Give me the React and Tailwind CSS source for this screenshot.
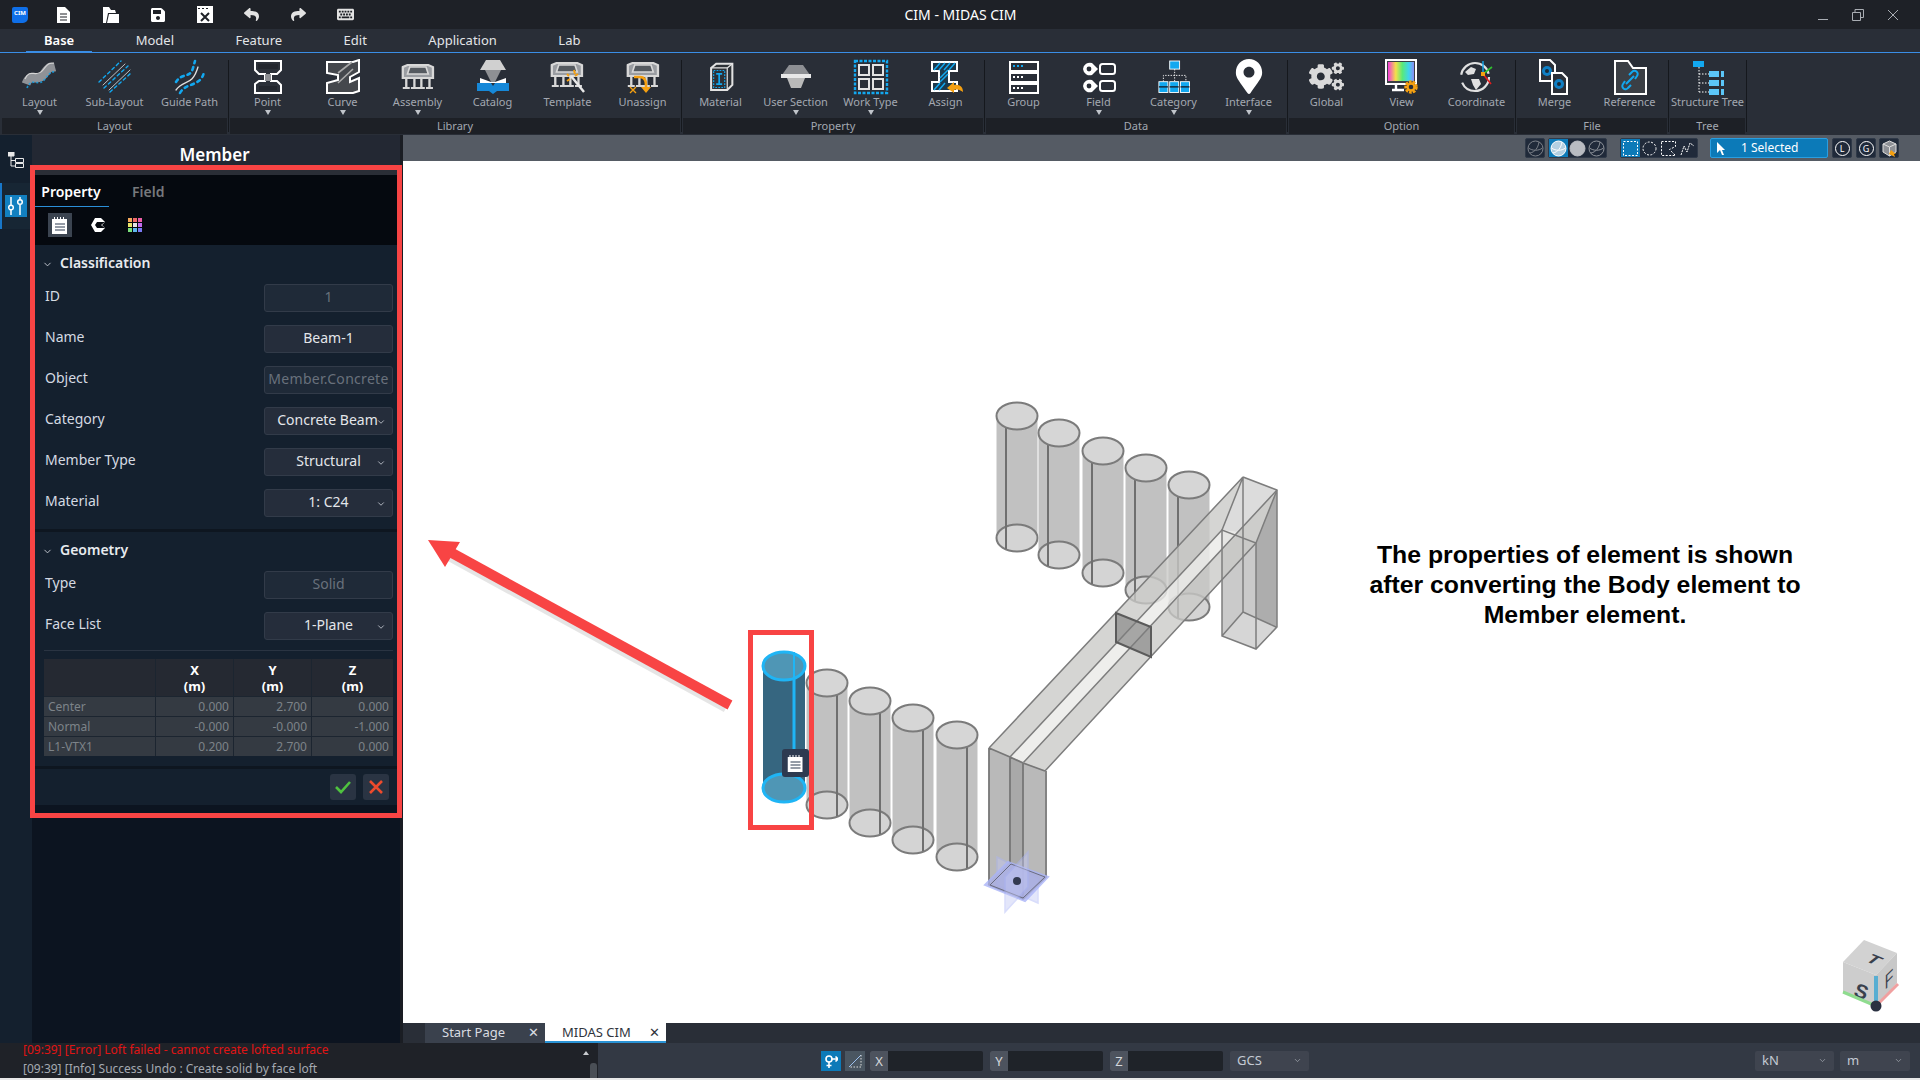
import { ChevronDown } from 'lucide-react';
import { FaCogs, FaMapMarkerAlt, FaReply, FaShare, FaKeyboard, FaSave } from 'react-icons/fa';

const BLUE = '#12a8f0';
const ORANGE = '#f5a011';

const Bridge = () => (
  <g fill="none" stroke="#d8d8d8" transform="translate(-3 0) scale(1.16 1)">
    <path d="M5 4l4-2h18l4 2v11H5z" fill="#9a9da2" strokeWidth="2" />
    <path d="M11 4h14l2 7H9z" fill="#555a60" strokeWidth="1.4" />
    <path d="M8 15v9M15 15v9M21 15v9M28 15v9M5 25h6M12 25h6M18 25h6M25 25h6" strokeWidth="2" />
  </g>
);

const Doc = ({ x = 0, y = 0 }) => (
  <g transform={`translate(${x} ${y})`}>
    <path d="M1 1h10l5 5v16H1z" fill="#2b3038" stroke="#fff" strokeWidth="2" />
    <circle cx="8" cy="12" r="5" fill="#0f7fc4" />
    <circle cx="8" cy="12" r="2" fill="#1b2a36" />
  </g>
);

const Row = ({ y }) => (
  <g>
    <rect x="4" y={y} width="28" height="9" fill="none" stroke="#fff" strokeWidth="2" />
    <rect x="7" y={y + 3} width="2" height="2" fill={y === 3 ? BLUE : '#fff'} />
    <rect x="11" y={y + 3} width="2" height="2" fill={y === 3 ? BLUE : '#fff'} />
    <rect x="15" y={y + 3} width="2" height="2" fill={y === 3 ? BLUE : '#fff'} />
  </g>
);

const RIBBON_ICONS = {
  layout: (
    <g fill="none">
      <path d="M4 25C9 12 15 25 22 15S29 9 33 8" stroke="#8f9297" strokeWidth="9" />
      <path d="M3 20C8 8 14 20 21 11S28 5 32 4" stroke="#d5d5d5" strokeWidth="1.2" />
      <path d="M5 29C10 17 16 29 23 20S30 14 34 12" stroke={BLUE} strokeWidth="1.6" strokeDasharray="2 2" opacity=".8" />
    </g>
  ),
  sublayout: (
    <g fill="none" strokeLinecap="round">
      <path d="M2 23L24 2M7 29L31 7M13 33L34 14" stroke={BLUE} strokeWidth="1.4" strokeDasharray="3 3" />
      <path d="M6 26L28 5M12 31L33 11" stroke="#bfc2c6" strokeWidth="1" />
    </g>
  ),
  guide: (
    <g fill="none" strokeLinecap="round">
      <path d="M4 23C10 13 18 20 21 9L23 2" stroke={BLUE} strokeWidth="2.6" strokeDasharray="3 4" />
      <path d="M8 34C14 23 29 28 32 13" stroke={BLUE} strokeWidth="2.6" strokeDasharray="3 4" />
      <path d="M4 31C12 20 20 28 26 8" stroke="#e0e0e0" strokeWidth="1.3" />
    </g>
  ),
  point: (
    <g>
      <path d="M5 2h26v9l-4 4h-6v7h6l4 4v8H5v-9l4-3h6v-7H9l-4-4z" fill="#2b3038" stroke="#fff" strokeWidth="2" />
      <path d="M15 15h6v7h-6z" fill="#8d8f93" />
      <path d="M8 5h20v5H8zM9 27h18v4H9z" fill="#23272e" />
    </g>
  ),
  curve: (
    <g>
      <path d="M2 3h26l6-2v12l-9 5v5l9-4v13l-6 2H2V24l11-3v-5L2 14z" fill="#45484d" stroke="#fff" strokeWidth="2" />
      <path d="M13 14l14-11M13 24l15-14" stroke="#aaa" strokeWidth="1.6" />
    </g>
  ),
  assembly: <g transform="translate(0 4)"><Bridge /></g>,
  catalog: (
    <g>
      <path d="M11 1h14l6 10H5z" fill="#d0d0d0" />
      <path d="M10 11h16l-6 12h-4z" fill="#8e9093" />
      <path d="M2 24l14 0 2 3 2-3h14v8H22l-4 3-4-3H2z" fill="#1688d8" />
      <path d="M5 19l11 4h4l11-4v5H5z" fill="#fff" />
    </g>
  ),
  template: (
    <g>
      <g transform="translate(-1 2)"><Bridge /></g>
      <path d="M21 17l13 16" stroke="#e8e8e8" strokeWidth="2.4" />
      <path d="M17 15l2 2M24 11l1 4M28 15l-3 2M17 22l3-2" stroke={ORANGE} strokeWidth="2" />
    </g>
  ),
  unassign: (
    <g>
      <g transform="translate(0 2)"><Bridge /></g>
      <path d="M9 18h6c5 0 6 4 6 8v3" fill="none" stroke={ORANGE} strokeWidth="2.6" />
      <path d="M16 28h10l-5 6z" fill={ORANGE} />
      <path d="M5 28l6 6M11 28l-6 6" stroke={ORANGE} strokeWidth="1.4" />
    </g>
  ),
  material: (
    <g transform="translate(3 3) scale(.85)">
      <path d="M6 7l6-5h19v25l-6 6H6z" fill="#2d3136" stroke="#e2e2e2" strokeWidth="2.400" />
      <path d="M6 7h19v26M25 7l6-5" fill="none" stroke="#e2e2e2" strokeWidth="1.4" />
      <rect x="9" y="10" width="13" height="20" fill="none" stroke={BLUE} strokeWidth="1.4" strokeDasharray="2 1.5" />
      <path d="M12 14h7M12 26h7M15.500 14v12" stroke={BLUE} strokeWidth="2" />
    </g>
  ),
  section: (
    <g>
      <path d="M11 6h14l7 10H4z" fill="#8d8f93" />
      <path d="M3 15h30v4H3z" fill="#e8e8e8" />
      <path d="M9 19h18l-4 10H13z" fill="#b9b9b9" />
    </g>
  ),
  worktype: (
    <g fill="none">
      <rect x="2" y="2" width="32" height="32" stroke={BLUE} strokeWidth="2.4" strokeDasharray="3 1.500" />
      <path d="M6 6h10v10H6zM20 6h10v10H20zM6 20h10v10H6zM20 20h10v10H20z" stroke="#e3e3e3" strokeWidth="2" />
    </g>
  ),
  assign: (
    <g>
      <path d="M4 3h25v9h-8v11h8v9H4V23h7V12H4z" fill="#1b3a4e" stroke="#fff" strokeWidth="2" />
      <path d="M6 11l6-7M11 11l6-7M16 11l6-7M21 11l6-7M12 19l8-8M12 23l8-8M6 31l6-7M11 31l6-7" stroke={BLUE} strokeWidth="1.500" />
      <path d="M35 33c0-5-3-8-9-7v-3l-7 6 7 5v-3c4-1 6 0 9 2z" fill={ORANGE} />
    </g>
  ),
  group: (
    <g>
      <Row y={3} />
      <Row y={14} />
      <Row y={25} />
    </g>
  ),
  field: (
    <g>
      <path d="M2 10a7 7 0 0 1 9-6l6 6-6 6a7 7 0 0 1-9-6z" fill="#fff" />
      <circle cx="8" cy="10" r="2.400" fill="#292e37" />
      <rect x="19" y="5" width="15" height="10" rx="2.500" fill="none" stroke="#fff" strokeWidth="2" />
      <path d="M2 27a7 7 0 0 1 9-6l6 6-6 6a7 7 0 0 1-9-6z" fill="#fff" />
      <circle cx="8" cy="27" r="2.400" fill="#292e37" />
      <rect x="19" y="22" width="15" height="10" rx="2.500" fill="none" stroke="#fff" strokeWidth="2" />
    </g>
  ),
  category: (
    <g transform="translate(2 2) scale(.9)">
      <rect x="13" y="0" width="11" height="9" fill={BLUE} stroke="#fff" />
      <path d="M18.500 9v14M6 23v-7h25v7" fill="none" stroke="#fff" strokeDasharray="1.500 1.500" />
      {[1, 13, 25].map((x) => (
        <g key={x}>
          <rect x={x} y="23" width="10" height="12" fill={BLUE} stroke="#fff" />
          <rect x={x} y="28" width="10" height="1.500" fill="#14202e" />
        </g>
      ))}
    </g>
  ),
  view: (
    <g>
      <defs>
        <linearGradient id="rainbow" x1="0" x2="1" y1="0" y2="0">
          <stop offset="0" stopColor="#f03bd8" />
          <stop offset=".3" stopColor="#f4e04a" />
          <stop offset=".55" stopColor="#59ea78" />
          <stop offset=".8" stopColor="#3fd4ee" />
          <stop offset="1" stopColor="#8a8cf5" />
        </linearGradient>
      </defs>
      <rect x="2" y="1" width="30" height="24" fill="#3b3f45" stroke="#fff" strokeWidth="2" />
      <rect x="4" y="3" width="26" height="19" fill="url(#rainbow)" />
      <path d="M12 25v6M8 31h12" stroke="#fff" strokeWidth="2.400" />
      <circle cx="27" cy="28" r="5" fill="#292e37" stroke={ORANGE} strokeWidth="3.400" strokeDasharray="2.500 1" />
      <circle cx="27" cy="28" r="3.500" fill="#292e37" stroke={ORANGE} strokeWidth="2.400" />
    </g>
  ),
  coordinate: (
    <g>
      <circle cx="16" cy="18" r="14" fill="none" stroke="#e0e0e0" strokeWidth="2.200" strokeDasharray="38 8" />
      <path d="M6 13l6-5 5 2-2 5-6 1zM12 20l8 0 2 5-5 6-3-5z" fill="#e0e0e0" />
      <path d="M24 15V2" stroke={BLUE} strokeWidth="1.400" />
      <path d="M24 15l9-7" stroke="#2fc12f" strokeWidth="1.600" />
      <path d="M24 15l8 10" stroke="#e81c1c" strokeWidth="1.600" />
      <rect x="22" y="13" width="4" height="4" fill={ORANGE} />
    </g>
  ),
  merge: (
    <g>
      <Doc x={2} y={0} />
      <Doc x={14} y={13} />
    </g>
  ),
  reference: (
    <g>
      <path d="M3 2h13l5 7h13v26H3z" fill="#3b3f45" stroke="#fff" strokeWidth="2" />
      <path d="M14 25l8-8M13 22l-2 3a3 3 0 0 0 5 4l3-3M23 20l2-3a3 3 0 0 0-5-4l-3 3" fill="none" stroke={BLUE} strokeWidth="2" />
    </g>
  ),
  tree: (
    <g>
      <rect x="3" y="2" width="11" height="6" fill={BLUE} />
      <path d="M9 8v25M9 15h10M9 24h10M9 33h10" fill="none" stroke="#fff" strokeDasharray="1.500 1.500" />
      {[12, 21, 30].map((y) => (
        <g key={y}>
          <rect x="19" y={y} width="10" height="6" fill="#5bc6f8" />
          <rect x="31" y={y} width="3" height="6" fill="#5bc6f8" />
        </g>
      ))}
    </g>
  ),
};

const GROUPS = [
  { name: 'Layout', items: [['Layout', 'layout', 1], ['Sub-Layout', 'sublayout'], ['Guide Path', 'guide']] },
  {
    name: 'Library',
    items: [['Point', 'point', 1], ['Curve', 'curve', 1], ['Assembly', 'assembly', 1], ['Catalog', 'catalog'], ['Template', 'template'], ['Unassign', 'unassign']],
  },
  { name: 'Property', items: [['Material', 'material'], ['User Section', 'section', 1], ['Work Type', 'worktype', 1], ['Assign', 'assign']] },
  { name: 'Data', items: [['Group', 'group'], ['Field', 'field', 1], ['Category', 'category', 1], ['Interface', 'interface', 1]] },
  { name: 'Option', items: [['Global', 'global'], ['View', 'view'], ['Coordinate', 'coordinate']] },
  { name: 'File', items: [['Merge', 'merge'], ['Reference', 'reference']] },
  { name: 'Tree', items: [['Structure Tree', 'tree']] },
];

function RibbonIcon({ id }) {
  if (id === 'global') return <FaCogs className="w-[35px] h-[35px] text-[#d9d9d9]" />;
  if (id === 'interface') return <FaMapMarkerAlt className="w-[32px] h-[35px] text-white" />;
  return (
    <svg width="36" height="36" viewBox="0 0 36 36">
      {RIBBON_ICONS[id]}
    </svg>
  );
}

function RibbonItem({ label, icon, caret }) {
  return (
    <div className="w-[75px] flex flex-col items-center">
      <div className="h-[37px] flex items-center justify-center">
        <RibbonIcon id={icon} />
      </div>
      <div className="text-[11px] leading-[14px] text-[#a3a8b1] whitespace-nowrap">{label}</div>
      {caret && <div className="mt-[1px] w-0 h-0 border-x-[3px] border-x-transparent border-t-[5px] border-t-[#c0c4ca]" />}
    </div>
  );
}

function Ribbon() {
  return (
    <div className="h-[82px] bg-[#292e37] flex pl-[2px]">
      {GROUPS.map((g) => (
        <div key={g.name} className="flex">
          <div className="flex flex-col pt-[5px]">
            <div className="flex h-[60px]">
              {g.items.map(([label, icon, caret]) => (
                <RibbonItem key={label} label={label} icon={icon} caret={caret} />
              ))}
            </div>
            <div className="h-[16px] bg-[#1d2026] text-[11px] leading-[16px] text-center text-[#a3a8b1]">{g.name}</div>
          </div>
          <div className="w-[3px] flex justify-center pt-[7px] pb-[3px]">
            <div className="w-px bg-[#15181d]" />
          </div>
        </div>
      ))}
    </div>
  );
}

function TitleBar() {
  const cell = 'w-[47px] flex items-center justify-center text-white';
  return (
    <div className="h-[29px] bg-[#1e2127] flex items-center">
      <div className="flex-1 flex h-full">
        <div className="w-[40px] flex items-center justify-center">
          <div className="w-[16px] h-[16px] bg-[#0f6fe8] rounded-[2px] rounded-br-[5px] text-[6px] leading-[12px] font-bold text-center text-white">CIM</div>
        </div>
        <div className={cell}>
          <svg width="13" height="16" viewBox="0 0 13 16">
            <path d="M0 0h8l5 5v11H0z" fill="#fff" />
            <path d="M3 7h7M3 10h7M3 13h7" stroke="#1e2127" />
          </svg>
        </div>
        <div className={cell}>
          <svg width="16" height="16" viewBox="0 0 16 16">
            <path d="M0 0h6l2 3h4l1 3H5L3 16H0z" fill="#fff" />
            <path d="M6 7h10v9H4z" fill="#fff" />
          </svg>
        </div>
        <div className={cell}><FaSave className="w-[16px] h-[16px]" /></div>
        <div className={cell}>
          <svg width="16" height="17" viewBox="0 0 16 17">
            <path d="M0 0h16v17H0z" fill="#fff" />
            <path d="M1 2h2v1H1zM5 2h2v1H5zM9 2h2v1H9z" fill="#1e2127" />
            <path d="M4 7l8 8M12 7l-8 8" stroke="#1e2127" strokeWidth="2" />
          </svg>
        </div>
        <div className={cell}><FaReply className="w-[15px] h-[15px] text-[#e2e2e2]" /></div>
        <div className={cell}><FaShare className="w-[15px] h-[15px] text-[#e2e2e2]" /></div>
        <div className={cell}><FaKeyboard className="w-[17px] h-[17px] text-[#e2e2e2]" /></div>
      </div>
      <div className="text-[14px] text-white pl-[11px]">CIM - MIDAS CIM</div>
      <div className="flex-1 flex justify-end pr-[10px] text-[#a9adb3]">
        <div className="w-[35px] flex justify-center">
          <svg width="12" height="12" viewBox="0 0 12 12"><path d="M1 10.500h10" stroke="currentColor" /></svg>
        </div>
        <div className="w-[35px] flex justify-center">
          <svg width="12" height="12" viewBox="0 0 12 12" fill="none" stroke="currentColor"><path d="M.5 3.500h8v8h-8zM3 3.500V.5h8.500v8H8.500" /></svg>
        </div>
        <div className="w-[35px] flex justify-center">
          <svg width="12" height="12" viewBox="0 0 12 12"><path d="M1 1l10 10M11 1L1 11" stroke="currentColor" /></svg>
        </div>
      </div>
    </div>
  );
}

function MenuTabs() {
  const tabs = ['Base', 'Model', 'Feature', 'Edit', 'Application', 'Lab'];
  return (
    <div className="h-[24px] bg-[#292e37] border-b border-[#3a8ee6] flex pl-[26px] gap-[25.5px]">
      {tabs.map((t) => (
        <div
          key={t}
          className={`px-[18px] text-[13px] leading-[23px] h-[23px] ${t === 'Base' ? 'font-semibold text-white border-b border-[#3a8ee6]' : 'text-[#e3e5e8]'}`}
        >
          {t}
        </div>
      ))}
    </div>
  );
}

function Field({ label, value, disabled, select, small, wide }) {
  return (
    <div className="flex h-[28px] justify-between">
      <div className="text-[14px] leading-[24px] text-[#d5dae2] pl-[13px]">{label}</div>
      <div className={`relative w-[129px] h-[28px] rounded-[3px] border border-[#323b49] ${disabled ? 'bg-[#1f2a38] text-[#69717c]' : 'bg-[#252d3b] text-[#e3e6ea]'} text-[14px] leading-[24px] text-center whitespace-nowrap overflow-hidden ${small ? 'pl-[2px] pr-[4px] text-[13.800px]' : ''} ${wide ? 'tracking-[0.3px]' : ''}`}>
        {value}
        {select && <ChevronDown className="absolute right-[6px] top-[9px] w-[10px] h-[10px] text-[#c9ced6]" />}
      </div>
    </div>
  );
}

function SectionTitle({ children }) {
  return (
    <div className="h-[20px] flex items-center pl-[10px] gap-[7px] text-[14px] leading-[18px] font-semibold text-[#e8ebef]">
      <ChevronDown className="w-[11px] h-[11px] text-[#c9ced6]" />
      <span className="-mt-[2px]">{children}</span>
    </div>
  );
}

const TABLE_ROWS = [
  ['Center', '0.000', '2.700', '0.000'],
  ['Normal', '-0.000', '-0.000', '-1.000'],
  ['L1-VTX1', '0.200', '2.700', '0.000'],
];

function CoordTable() {
  return (
    <div className="mt-[8px] grid grid-cols-[111px_77px_77px_81px] gap-px bg-[#1c2530]">
      <div className="h-[37px] bg-[#252932]" />
      {['X', 'Y', 'Z'].map((h) => (
        <div key={h} className="h-[37px] bg-[#252932] text-center text-[13px] leading-[16px] font-bold text-white pt-[3px]">
          {h}
          <br />
          (m)
        </div>
      ))}
      {TABLE_ROWS.map((row) =>
        row.map((cell, i) => (
          <div key={row[0] + i} className={`h-[19px] bg-[#343a42] text-[12px] leading-[19px] text-[#7d8389] px-[4px] ${i === 0 ? '' : 'text-right'}`}>
            {cell}
          </div>
        ))
      )}
    </div>
  );
}

function PropertyPanel() {
  return (
    <div className="w-[371px] flex flex-col bg-[#0c1420] border-r-[3px] border-[#1a1d23]">
      <div className="h-[30px] bg-[#232833] text-center text-[17px] leading-[30px] font-semibold text-white pt-[5px] pr-[3px]">Member</div>
      <div className="h-[10px] bg-[#2a2e36]" />
      <div className="h-[70px] bg-[#05090f] pl-[3px]">
        <div className="h-[32px] flex">
          <div className="w-[74px] h-[32px] pr-[2px] border-b border-[#2b8fd8] text-center text-[14px] leading-[34px] font-semibold text-white">Property</div>
          <div className="ml-[23px] text-[14px] leading-[34px] font-semibold text-[#77797c]">Field</div>
        </div>
        <div className="flex items-center mt-[6px] pl-[13px]">
          <div className="w-[24px] h-[24px] bg-[#3b4450] flex items-center justify-center">
            <MemoIcon />
          </div>
          <svg width="16" height="16" viewBox="0 0 16 16" className="ml-[18px]">
            <path d="M5 1h6l4 4-3 3 3 3-4 4H5L1 8z" fill="#fff" />
            <path d="M7 5h8L11 8l4 3H7L5 8z" fill="#05090f" />
          </svg>
          <div className="ml-[22px] grid grid-cols-3 gap-px w-[14px]">
            {['#f5a95c', '#f06a6a', '#ee5fa8', '#e9e469', '#e6e6e6', '#c46bf0', '#7be07b', '#5fb8f0', '#7a7af5'].map((c) => (
              <div key={c} className="h-[4px]" style={{ backgroundColor: c }} />
            ))}
          </div>
        </div>
      </div>
      <div className="bg-[#14202e] pt-[9px] pb-[12px] pr-[7px]">
        <SectionTitle>Classification</SectionTitle>
        <div className="mt-[10px] flex flex-col gap-[13px]">
          <Field label="ID" value="1" disabled />
          <Field label="Name" value="Beam-1" />
          <Field label="Object" value="Member.Concrete" disabled wide />
          <Field label="Category" value="Concrete Beam" select small />
          <Field label="Member Type" value="Structural" select />
          <Field label="Material" value="1: C24" select />
        </div>
      </div>
      <div className="h-[3px] bg-[#0e1620]" />
      <div className="bg-[#14202e] pt-[9px] pb-[10px] pr-[7px]">
        <SectionTitle>Geometry</SectionTitle>
        <div className="mt-[10px] flex flex-col gap-[13px]">
          <Field label="Type" value="Solid" disabled />
          <Field label="Face List" value="1-Plane" select />
        </div>
        <div className="mt-[10px] ml-[12px]">
          <div className="h-px bg-[#2a3442]" />
          <CoordTable />
        </div>
      </div>
      <div className="h-[3px] bg-[#0e1620]" />
      <div className="bg-[#14202e] h-[36px] flex items-center justify-end gap-[7px] pr-[11px]">
        <div className="w-[26px] h-[26px] rounded-[3px] bg-[#2a3443] flex items-center justify-center">
          <svg width="16" height="14" viewBox="0 0 16 14"><path d="M1 7l5 5 9-10" fill="none" stroke="#4fc23f" strokeWidth="2.600" /></svg>
        </div>
        <div className="w-[26px] h-[26px] rounded-[3px] bg-[#2a3443] flex items-center justify-center">
          <svg width="14" height="14" viewBox="0 0 14 14"><path d="M1 1l12 12M13 1L1 13" stroke="#ee4a2c" strokeWidth="2.600" /></svg>
        </div>
      </div>
      <div className="flex-1" />
    </div>
  );
}

function MemoIcon() {
  return (
    <svg width="16" height="17" viewBox="0 0 16 17">
      <path d="M0 2h2V0h1v2h2V0h1v2h2V0h1v2h2V0h1v2h3v15H0z" fill="#fff" />
      <path d="M3 7h10M3 10h10M3 13h10" stroke="#2d3a50" strokeWidth="1.200" />
    </svg>
  );
}

function Rail() {
  return (
    <div className="w-[32px] bg-[#14202e] pt-[17px] flex flex-col">
      <svg width="16" height="16" viewBox="0 0 16 16" className="ml-[8px]" fill="none" stroke="#e8e8e8">
        <path d="M0 0h6v4H0z" fill="#e8e8e8" />
        <path d="M3 4v10h4M3 8.500h4M7.500 6.500h8v4h-8zM7.500 11.500h8v4h-8z" />
      </svg>
      <div className="mt-[15px] h-[46px] bg-[#172634] border-l-[2px] border-[#1877c9] flex items-center pl-[3px]">
        <div className="w-[22px] h-[22px] bg-[#1280c0] flex items-center justify-center">
          <svg width="16" height="18" viewBox="0 0 16 18" fill="none" stroke="#fff" strokeWidth="1.500">
            <path d="M3 0v8M3 13v5M12 0v2M12 8v10" />
            <circle cx="3" cy="10.500" r="2.300" />
            <circle cx="12" cy="5" r="2.300" />
          </svg>
        </div>
      </div>
    </div>
  );
}

function ViewBtn({ active, children }) {
  return <div className={`h-[18px] w-[19px] flex items-center justify-center ${active ? 'bg-[#0c7ab8]' : ''}`}>{children}</div>;
}

const Sphere = ({ fill = 'none', stroke = '#c8ccd2', grid }) => (
  <svg width="17" height="17" viewBox="0 0 17 17" fill={fill} stroke={stroke}>
    <circle cx="8.500" cy="8.500" r="7.500" />
    {grid && <path d="M3 13c5-1 8-5 9-11M1.500 8c4 3 10 3 14 0" />}
  </svg>
);

function ViewToolbar() {
  const box = 'h-[20px] bg-[#202a3a] rounded-[2px] border border-[#2f3948] flex items-center';
  return (
    <div className="h-[26px] bg-[#555b64] flex items-center justify-end pr-[21px]">
      <div className={`${box} w-[20px] justify-center mr-[3px]`}>
        <Sphere stroke="#7d828a" grid />
      </div>
      <div className={`${box} mr-[13px]`}>
        <ViewBtn active><Sphere fill="#b4d0e2" stroke="#fff" grid /></ViewBtn>
        <ViewBtn><Sphere fill="#b9bcc2" stroke="#b9bcc2" /></ViewBtn>
        <ViewBtn><Sphere stroke="#8e939a" grid /></ViewBtn>
      </div>
      <div className={`${box} mr-[12px]`}>
        <ViewBtn active>
          <svg width="15" height="15" viewBox="0 0 15 15"><rect x=".5" y=".5" width="14" height="14" fill="none" stroke="#fff" strokeDasharray="2 1.500" /></svg>
        </ViewBtn>
        <ViewBtn>
          <svg width="15" height="15" viewBox="0 0 15 15"><circle cx="7.500" cy="7.500" r="6.500" fill="none" stroke="#fff" strokeDasharray="2 1.500" /></svg>
        </ViewBtn>
        <ViewBtn>
          <svg width="15" height="15" viewBox="0 0 15 15"><path d="M.5.5h14v5l-6 3 6 6H.5z" fill="none" stroke="#fff" strokeDasharray="2 1.500" /></svg>
        </ViewBtn>
        <ViewBtn>
          <svg width="15" height="15" viewBox="0 0 15 15"><path d="M1 14l3-9 3 6 3-9 4 3" fill="none" stroke="#fff" strokeDasharray="2 1" /></svg>
        </ViewBtn>
      </div>
      <div className="h-[20px] w-[118px] mr-[4px] bg-[#0c7ab8] border border-[#2a9ee0] rounded-[2px] flex items-center text-[12px] text-white">
        <svg width="9" height="13" viewBox="0 0 9 13" className="ml-[6px]"><path d="M0 0l8 8H5l2 5-2 0-2-5-3 3z" fill="#fff" /></svg>
        <span className="ml-[15px]">1 Selected</span>
      </div>
      <div className={`${box} w-[20px] justify-center mr-[4px]`}>
        <div className="w-[15px] h-[15px] rounded-full border border-white text-[9px] leading-[13px] text-center text-white">L</div>
      </div>
      <div className={`${box} w-[20px] justify-center mr-[3px]`}>
        <div className="w-[15px] h-[15px] rounded-full border border-white text-[9px] leading-[13px] text-center text-white">G</div>
      </div>
      <div className={`${box} w-[20px] justify-center`}>
        <svg width="15" height="17" viewBox="0 0 15 17">
          <path d="M7.500 1l6.500 3v8l-6.500 4L1 12V4z" fill="#8d9096" stroke="#ddd" />
          <path d="M1 4l6.500 3L14 4M7.500 7v9" stroke="#ddd" fill="none" />
          <path d="M9 10l5 4-2 0 1 3-6-3z" fill={ORANGE} />
        </svg>
      </div>
    </div>
  );
}

const BACK_ROW = [[1017, 416], [1059, 433], [1103, 451], [1146, 468], [1189, 485]];
const FRONT_ROW = [[827, 683], [870, 701], [913, 718], [957, 735]];

function Cylinder({ cx, cy, line }) {
  return (
    <g>
      <path d={`M${cx - 20.5} ${cy}V${cy + 122}A20.500 13.500 0 0 0 ${cx + 20.5} ${cy + 122}V${cy}z`} fill="#bababa" opacity=".9" />
      <ellipse cx={cx} cy={cy + 122} rx="20.500" ry="13.500" fill="#d4d4d4" stroke="#7b7b7b" strokeWidth="2" />
      <path d={`M${cx + line} ${cy + 12}V${cy + 133}`} stroke="#6f6f6f" strokeWidth="2" />
      <ellipse cx={cx} cy={cy} rx="20.500" ry="13.500" fill="#d6d6d6" stroke="#7b7b7b" strokeWidth="2" />
    </g>
  );
}

function Model() {
  return (
    <svg className="absolute inset-0 w-full h-full" viewBox="403 161 1517 862">
      {BACK_ROW.map(([x, y]) => (
        <Cylinder key={x} cx={x} cy={y} line={-11} />
      ))}

      {/* rear box */}
      <path d="M1243 477L1277 490V627L1256 649L1222 636V530z" fill="#c4c4c4" opacity=".9" />
      <path d="M1256 543L1277 490V627L1256 649z" fill="#adadad" />
      <path d="M1243 477L1222 530L1256 543L1277 490z" fill="#dcdcdc" />
      <path d="M1222 636L1243 612L1276 627L1256 649z" fill="#d6d6d6" />

      {/* beam */}
      <path d="M989 748L1243 477L1222 530L1010 757z" fill="#c9c9c7" opacity=".78" />
      <path d="M1010 757L1222 530L1240 532L1023 763z" fill="#ebebe9" opacity=".85" />
      <path d="M1023 763L1277 490L1256 543L1045 771z" fill="#c9c9c7" opacity=".78" />
      <path d="M1116 613L1151 627V657L1116 642z" fill="#8e8e8e" opacity=".75" />
      <g fill="none" stroke="#7d7d7d" strokeWidth="1.500">
        <path d="M989 748L1243 477M1010 757L1222 530M1023 763L1277 490M1045 771L1256 543" />
        <path d="M1243 477L1277 490V627L1256 649L1222 636V530L1256 543V649M1243 477V612L1276 627M1243 612L1222 636M1243 477L1222 530M1277 490L1256 543" />
        <path d="M1116 613L1151 627V657L1116 642z" stroke="#5b5b5b" strokeWidth="2" />
      </g>

      {FRONT_ROW.map(([x, y]) => (
        <Cylinder key={x} cx={x} cy={y} line={10} />
      ))}

      {/* column */}
      <path d="M989 748L1045 771V877L1023 899L989 885z" fill="#b9b9b9" />
      <path d="M1010 757V868L1023 899V763z" fill="#a9a9a9" />
      <path d="M989 748L1010 757L1023 763L1045 771M989 748V885L1023 899L1046 877V771M1010 757V865M1023 763V899" fill="none" stroke="#777" strokeWidth="1.800" />

      {/* origin gizmo */}
      <path d="M997 857V885L1038 903V878z" fill="#c3c8f5" opacity=".45" stroke="#aab4f8" strokeWidth="1.500" />
      <path d="M985 885L1008 862L1048 877L1025 901z" fill="#a9aee4" opacity=".8" stroke="#aab4f8" strokeWidth="2" />
      <path d="M990 885L1011 864L1045 877L1023 898z" fill="none" stroke="#6a6c80" />
      <path d="M1028 852L1005 877V912L1028 887z" fill="#c3c8f5" opacity=".45" stroke="#aab4f8" strokeWidth="1.500" />
      <circle cx="1017" cy="881" r="4" fill="#333a50" />

      {/* selected cylinder */}
      <path d="M763 666V788A21 14 0 0 0 805 788V666z" fill="#366680" />
      <path d="M794 668V762" stroke="#1fb5f5" strokeWidth="3" />
      <ellipse cx="784" cy="788" rx="21" ry="14" fill="#4f96b5" stroke="#1fb5f5" strokeWidth="3" />
      <ellipse cx="784" cy="666" rx="21" ry="14" fill="#4f96b5" stroke="#1fb5f5" strokeWidth="3" />
      <path d="M794 652V680" stroke="#1fb5f5" strokeWidth="2" />
      <rect x="782" y="749" width="27" height="28" rx="3" fill="#2d3a50" />
      <g transform="translate(787.500 755)"><MemoIcon /></g>

      {/* nav cube */}
      <path d="M1864 940L1897 953L1876 975L1843 962z" fill="#d2d2d2" />
      <path d="M1843 962L1876 975V1007L1843 992z" fill="#cdcdcd" />
      <path d="M1876 975L1897 953V983L1876 1007z" fill="#c8c8c8" />
      <text transform="translate(1870 963) rotate(22) skewX(-30) scale(1 .7)" textAnchor="middle" fontFamily="Liberation Sans" fontWeight="700" fontSize="20" fill="#39404c">T</text>
      <text transform="translate(1859 998) rotate(20)" textAnchor="middle" fontFamily="Liberation Sans" fontWeight="700" fontSize="20" fill="#39404c">S</text>
      <text transform="translate(1889 986) skewY(-45) scale(.7 1)" textAnchor="middle" fontFamily="Liberation Sans" fontWeight="400" fontSize="20" fill="#39404c">F</text>
      <path d="M1843 992L1876 1006" stroke="#8fdc8f" strokeWidth="3" />
      <path d="M1876 1006L1898 984" stroke="#f0a0a0" strokeWidth="3" />
      <path d="M1876 976V1006" stroke="#58aed2" strokeWidth="4" />
      <circle cx="1876" cy="1006" r="5.500" fill="#2a3040" />

      {/* red markers */}
      <rect x="750.500" y="632.500" width="61" height="195" fill="none" stroke="#f84444" strokeWidth="5" />
      <path d="M726 708L450 557" fill="none" stroke="#000" strokeWidth="9" opacity=".1" />
      <path d="M730 705L452 553" stroke="#f84444" strokeWidth="10" />
      <path d="M428 540L460 542L445 567z" fill="#f84444" />
    </svg>
  );
}

function DocTabs() {
  return (
    <div className="h-[20px] bg-[#292e37] flex pl-[22px] text-[13px] leading-[19px]">
      <div className="w-[120px] bg-[#3a414d] flex text-[#d9dce1]">
        <span className="ml-[17px] flex-1">Start Page</span>
        <span className="mr-[6px] text-[#d9dce1]">✕</span>
      </div>
      <div className="w-[121px] bg-white border-b-2 border-[#2a93d5] flex text-[#30353d]">
        <span className="ml-[17px] flex-1">MIDAS CIM</span>
        <span className="mr-[6px]">✕</span>
      </div>
    </div>
  );
}

function Viewport() {
  return (
    <div className="flex-1 flex flex-col min-w-0">
      <ViewToolbar />
      <div className="flex-1 relative bg-white">
        <Model />
        <div className="absolute left-[1182px] top-[379px] w-[0px] flex justify-center">
          <div className="whitespace-nowrap text-center text-[24.800px] leading-[30px] font-bold text-black font-['Liberation_Sans',sans-serif]">
            The properties of element is shown
            <br />
            after converting the Body element to
            <br />
            Member element.
          </div>
        </div>
      </div>
      <DocTabs />
    </div>
  );
}

function CoordField({ label }) {
  return (
    <div className="w-[113px] h-[20px] bg-[#1f2329] rounded-[2px] flex">
      <div className="w-[18px] bg-[#4d535e] text-[#d5d8dc] text-[13px] leading-[20px] text-center rounded-l-[2px]">{label}</div>
    </div>
  );
}

function Combo({ value, width }) {
  return (
    <div className={`${width} h-[20px] bg-[#3f444f] rounded-[2px] flex items-center justify-between px-[7px] text-[13px] text-[#c4cad3]`}>
      {value}
      <ChevronDown className="w-[9px] h-[9px] text-[#a0a5ad]" />
    </div>
  );
}

function StatusBar() {
  return (
    <div className="h-[35px] flex">
      <div className="w-[598px] bg-[#1f2228] relative pl-[23px] text-[12px] leading-[14px]">
        <div className="text-[#e01414]">[09:39] [Error] Loft failed - cannot create lofted surface</div>
        <div className="mt-[5px] text-[#a5aab2]">[09:39] [Info] Success Undo : Create solid by face loft</div>
        <div className="absolute left-[583px] top-[8px] w-0 h-0 border-x-[3px] border-x-transparent border-b-[4px] border-b-[#c9ccd0]" />
        <div className="absolute left-[590px] bottom-0 w-[7px] h-[15px] bg-[#4a4f56] rounded-t-[3px]" />
      </div>
      <div className="flex-1 bg-[#333944] flex items-center pl-[223px]">
        <div className="w-[20px] h-[20px] bg-[#0c7ab8] flex items-center justify-center">
          <svg width="14" height="16" viewBox="0 0 14 16" fill="none" stroke="#fff" strokeWidth="1.600">
            <circle cx="5" cy="6" r="3" />
            <path d="M8 6h6M5 9v6M2.500 12.500h5M11.500 3.500L14 6l-2.500 2.500" />
          </svg>
        </div>
        <div className="ml-[4px] w-[20px] h-[20px] bg-[#4a5661] flex items-center justify-center">
          <svg width="14" height="14" viewBox="0 0 14 14" fill="none">
            <path d="M1 13L13 1" stroke="#9cc0ee" />
            <path d="M13 1v12H1" stroke="#ddd" strokeDasharray="1.500 1.500" />
          </svg>
        </div>
        <div className="ml-[5px]"><CoordField label="X" /></div>
        <div className="ml-[7px]"><CoordField label="Y" /></div>
        <div className="ml-[7px]"><CoordField label="Z" /></div>
        <div className="ml-[7px]"><Combo value="GCS" width="w-[79px]" /></div>
        <div className="ml-[446px]"><Combo value="kN" width="w-[79px]" /></div>
        <div className="ml-[6px]"><Combo value="m" width="w-[70px]" /></div>
      </div>
    </div>
  );
}

export default function App() {
  return (
    <div className="relative w-screen h-screen overflow-hidden flex flex-col bg-[#1e2127] font-['Noto_Sans',sans-serif]">
      <TitleBar />
      <MenuTabs />
      <Ribbon />
      <div className="flex-1 flex min-h-0">
        <Rail />
        <PropertyPanel />
        <Viewport />
      </div>
      <StatusBar />
      <div className="h-[2px] bg-[#e8e8e8]" />
      {/* annotation frame round the panel */}
      <div className="absolute left-[30px] top-[165px] w-[372px] h-[653px] border-[5px] border-[#f84444] pointer-events-none" />
    </div>
  );
}
